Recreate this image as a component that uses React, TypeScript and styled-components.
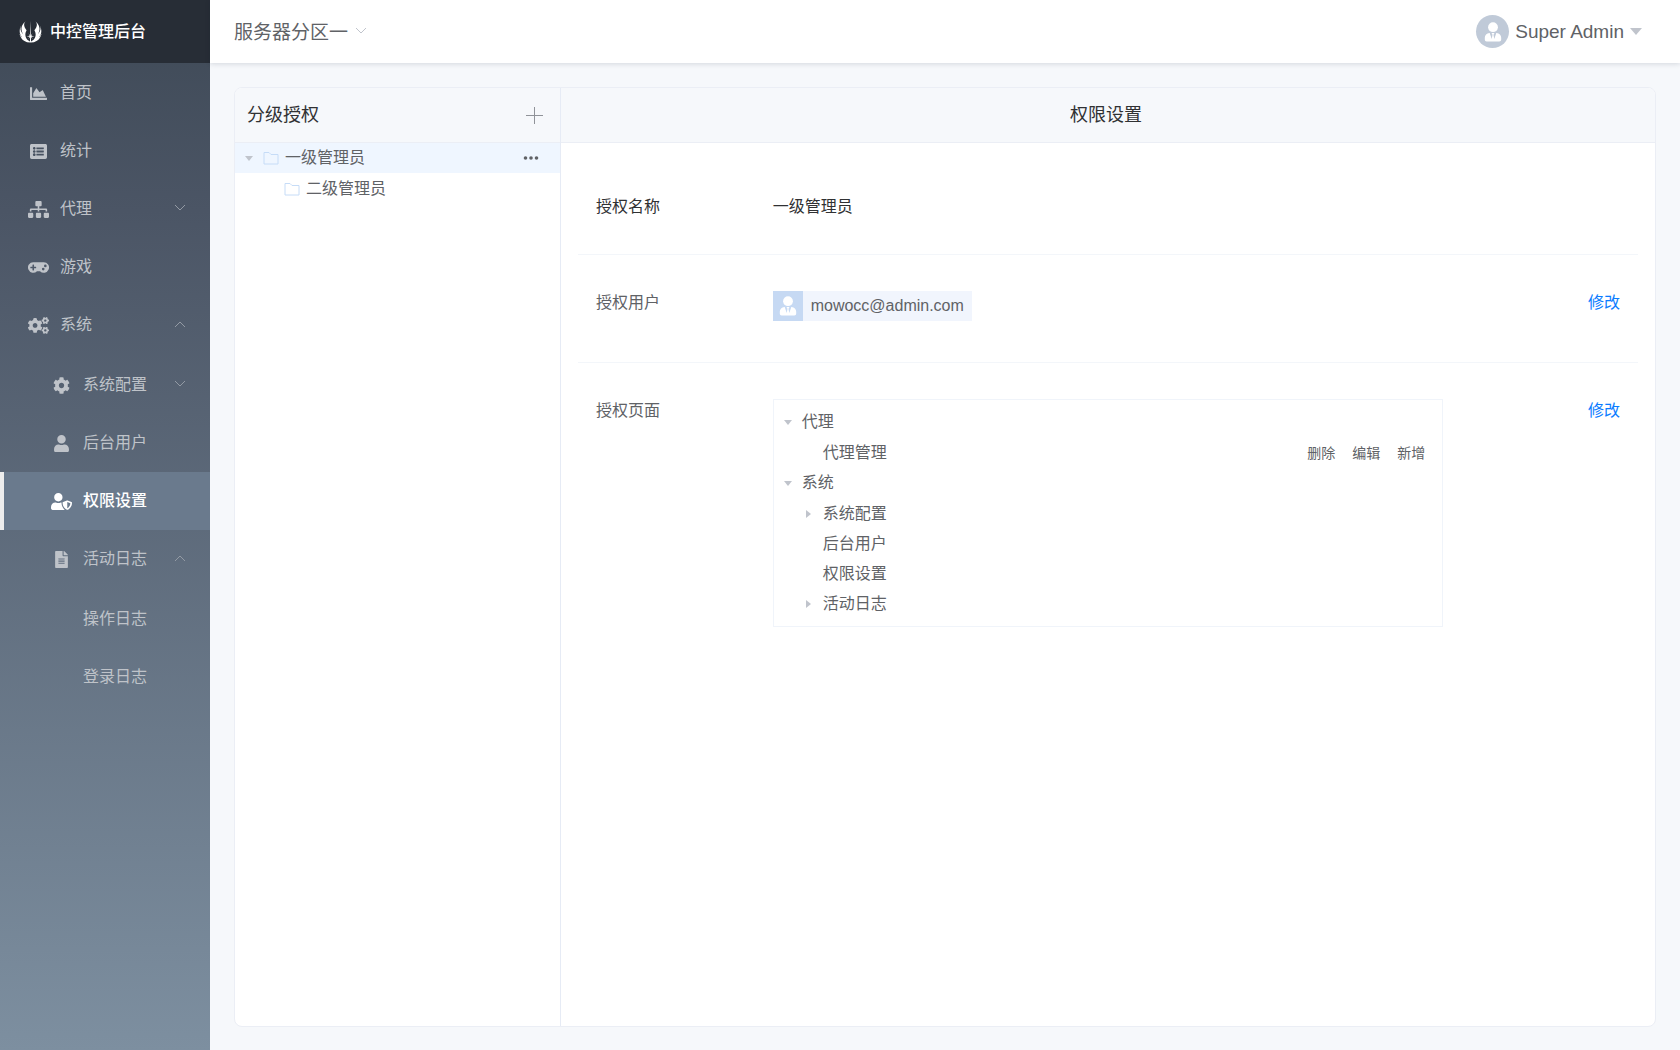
import React from 'react';
import styled, { createGlobalStyle } from 'styled-components';
import {
  FaChartArea,
  FaCog,
  FaCogs,
  FaFileAlt,
  FaGamepad,
  FaJediOrder,
  FaListAlt,
  FaSitemap,
  FaUser,
  FaUserShield,
} from 'react-icons/fa';

const GlobalStyle = createGlobalStyle`
  *, *::before, *::after { box-sizing: border-box; }
  body {
    margin: 0;
    background: #f6f8fb;
    color: #606266;
    font: 16px/24px "Liberation Sans", "Noto Sans CJK SC", sans-serif;
  }
  button, select { font: inherit; color: inherit; }
  h1, h2, dl, dt, dd, ul { margin: 0; padding: 0; font-weight: 400; }
  ul { list-style: none; }
  svg { display: block; flex: none; }
`;

const Shell = styled.div`
  display: grid;
  grid-template-columns: 210px minmax(0, 1fr);
  min-height: 100vh;
`;

/* ---------- sidebar ---------- */

const Sidebar = styled.aside`
  display: flex;
  flex-direction: column;
  background: linear-gradient(180deg, #3e4956 0%, #4b5565 20%, #7d8fa0 100%);
`;

const Brand = styled.h1`
  display: flex;
  align-items: center;
  gap: 7px;
  height: 63px;
  padding: 0 18px;
  background: #272d36;
  color: #fff;
  font-size: 16px;
  font-weight: 500;
`;

const Menu = styled.ul<{ $nested: boolean }>`
  padding-top: ${(p) => (p.$nested ? 2 : 1)}px;
`;

const MenuLink = styled.a<{ $level: number; $active?: boolean }>`
  display: flex;
  align-items: center;
  gap: 11px;
  height: 58px;
  padding: 0 24px 0 ${(p) => (p.$level === 1 ? 24 : p.$level === 2 ? 47 : 79)}px;
  border-left: 4px solid ${(p) => (p.$active ? '#ededed' : 'transparent')};
  background: ${(p) => (p.$active ? '#6a7a8d' : 'transparent')};
  background-clip: padding-box;
  color: ${(p) => (p.$active ? '#fff' : '#bfc3c9')};
  font-weight: ${(p) => (p.$active ? 500 : 400)};
  text-decoration: none;
`;

const MenuIcon = styled.span`
  display: flex;
  justify-content: center;
  width: 21px;
`;

const MenuLabel = styled.span`
  flex: 1;
`;

type MenuEntry = {
  label: string;
  icon?: React.ReactNode;
  active?: boolean;
  arrow?: 'up' | 'down';
  children?: MenuEntry[];
};

const menu: MenuEntry[] = [
  { label: '首页', icon: <FaChartArea size={17} /> },
  { label: '统计', icon: <FaListAlt size={17} /> },
  { label: '代理', icon: <FaSitemap size={21} />, arrow: 'down' },
  { label: '游戏', icon: <FaGamepad size={21} /> },
  {
    label: '系统',
    icon: <FaCogs size={21} />,
    arrow: 'up',
    children: [
      { label: '系统配置', icon: <FaCog size={17} />, arrow: 'down' },
      { label: '后台用户', icon: <FaUser size={17} /> },
      { label: '权限设置', icon: <FaUserShield size={21} />, active: true },
      {
        label: '活动日志',
        icon: <FaFileAlt size={17} />,
        arrow: 'up',
        children: [{ label: '操作日志' }, { label: '登录日志' }],
      },
    ],
  },
];

function Chevron({ up, color = '#939aa4' }: { up?: boolean; color?: string }) {
  return (
    <svg width="12" height="10" viewBox="0 0 12 10" fill="none" stroke={color} aria-hidden="true">
      <path d={up ? 'M1 7l5-5 5 5' : 'M1 1l5 5 5-5'} />
    </svg>
  );
}

function MenuList({ items, level = 1 }: { items: MenuEntry[]; level?: number }) {
  return (
    <Menu $nested={level > 1}>
      {items.map((item) => (
        <li key={item.label}>
          <MenuLink href="#" $level={level} $active={item.active}>
            {item.icon && <MenuIcon>{item.icon}</MenuIcon>}
            <MenuLabel>{item.label}</MenuLabel>
            {item.arrow && <Chevron up={item.arrow === 'up'} />}
          </MenuLink>
          {item.children && <MenuList items={item.children} level={level + 1} />}
        </li>
      ))}
    </Menu>
  );
}

/* ---------- header ---------- */

const Main = styled.div`
  display: flex;
  flex-direction: column;
`;

const Header = styled.header`
  display: flex;
  align-items: center;
  justify-content: space-between;
  height: 63px;
  padding: 0 38px 0 24px;
  background: #fff;
  box-shadow: 0 1px 5px rgba(0, 21, 41, 0.14);
  font-size: 19px;
`;

const ZonePicker = styled.label`
  display: grid;
  align-items: center;
  justify-items: end;

  > * { grid-area: 1 / 1; }
  > svg { pointer-events: none; }
`;

const ZoneSelect = styled.select`
  appearance: none;
  padding: 2px 18px 0 0;
  border: 0;
  background: none;
  outline-offset: 4px;
`;

const UserButton = styled.button`
  display: flex;
  align-items: center;
  gap: 6px;
  padding: 0;
  border: 0;
  background: none;
`;

const Avatar = styled.span<{ $round?: boolean }>`
  display: flex;
  align-items: center;
  justify-content: center;
  width: ${(p) => (p.$round ? 33 : 30)}px;
  height: ${(p) => (p.$round ? 33 : 30)}px;
  border-radius: ${(p) => (p.$round ? '50%' : '0')};
  background: ${(p) => (p.$round ? '#c0cad8' : '#c6d9f3')};
`;

const Caret = styled.span<{ $dir?: 'down' | 'right'; $large?: boolean }>`
  width: 0;
  height: 0;
  border: ${(p) => (p.$large ? 6 : 4)}px solid transparent;
  ${(p) =>
    p.$dir === 'right'
      ? 'border-left: 5px solid #c0c4cc; border-right: 0;'
      : `border-top: ${p.$large ? 7 : 5}px solid #c0c4cc; border-bottom: 0;`}
`;

function PersonGlyph() {
  return (
    <svg width="18" height="20" viewBox="0 0 18 20" fill="#fff" aria-hidden="true">
      <circle cx="9" cy="5.200" r="4.900" />
      <path
        fillRule="evenodd"
        d="M5.400 10.900h7.200c2.700.3 4.600 2.300 4.600 4.900v1.800c0 1.300-.7 1.900-1.900 1.900H2.700c-1.200 0-1.900-.6-1.900-1.900v-1.800c0-2.600 1.900-4.600 4.600-4.900zM5.700 10.900l2 6.200.8-4.400-.8-1.100v-.7zM12.300 10.900h-2v.7l-.8 1.100.8 4.400z"
      />
    </svg>
  );
}

/* ---------- content card ---------- */

const Card = styled.main`
  flex: 1;
  display: grid;
  grid-template-columns: 326px minmax(0, 1fr);
  margin: 24px 24px 23px;
  border: 1px solid #ebeef5;
  border-radius: 8px;
  background: #fff;
  overflow: hidden;
`;

const Pane = styled.section<{ $divided?: boolean }>`
  border-right: ${(p) => (p.$divided ? '1px solid #e6ebf5' : '0')};
`;

const PaneHeader = styled.header<{ $centered?: boolean }>`
  display: flex;
  align-items: center;
  justify-content: ${(p) => (p.$centered ? 'center' : 'space-between')};
  height: 55px;
  padding: 0 16px 0 12px;
  border-bottom: 1px solid #ebeef5;
  background: #f6f8fb;
  color: #303133;

  h2 { font-size: 18px; }
`;

const IconButton = styled.button`
  display: flex;
  padding: 0;
  border: 0;
  background: none;
`;

const TreeGroup = styled.ul<{ $nested?: boolean }>`
  padding-top: ${(p) => (p.$nested ? 1 : 0)}px;
`;

const TreeRow = styled.div<{ $depth?: number; $selected?: boolean }>`
  display: flex;
  align-items: center;
  height: 30px;
  padding-left: ${(p) => (p.$depth ?? 0) * 21}px;
  padding-right: 21px;
  background: ${(p) => (p.$selected ? '#eff6ff' : 'transparent')};
`;

const TreeToggle = styled.button`
  display: flex;
  align-items: center;
  justify-content: center;
  width: 28px;
  height: 30px;
  padding: 0;
  border: 0;
  background: none;
`;

const TreeLabel = styled.span`
  flex: 1;
`;

const FolderSlot = styled.span`
  width: 22px;
`;

function Folder() {
  return (
    <FolderSlot>
      <svg width="16" height="14" viewBox="0 0 16 14" fill="none" stroke="#c6dcf7" aria-hidden="true">
        <path d="M1 1.500h5l2 2h7v9.500H1z" />
      </svg>
    </FolderSlot>
  );
}

const Details = styled.dl`
  padding: 16px 17px;
`;

const Field = styled.div<{ $strong?: boolean }>`
  display: grid;
  grid-template-columns: 4fr 16fr 4fr;
  padding: 36px 0 35px;
  color: ${(p) => (p.$strong ? '#303133' : '#606266')};

  &:not(:last-child) { border-bottom: 1px solid #f3f6fa; }
  > * { padding: 0 18px; }
`;

const FieldAction = styled.dd`
  display: flex;
  align-items: flex-start;
  justify-content: flex-end;
`;

const TextButton = styled.button`
  padding: 0;
  border: 0;
  background: none;
  color: #0a7cff;
`;

const UserTag = styled.span`
  display: inline-flex;
  align-items: center;
  gap: 8px;
  height: 30px;
  margin-bottom: 6px;
  padding-right: 8px;
  background: #f1f5fd;
  vertical-align: top;
`;

const PageTree = styled.div`
  padding: 7px 0;
  border: 1px solid #f0f4fa;
`;

const Permissions = styled.span`
  display: flex;
  gap: 17px;
  margin-right: -4px;
  font-size: 14px;
`;

type PageNode = { label: string; state?: 'open' | 'closed'; permissions?: string[]; children?: PageNode[] };

const pages: PageNode[] = [
  {
    label: '代理',
    state: 'open',
    children: [{ label: '代理管理', permissions: ['删除', '编辑', '新增'] }],
  },
  {
    label: '系统',
    state: 'open',
    children: [
      { label: '系统配置', state: 'closed' },
      { label: '后台用户' },
      { label: '权限设置' },
      { label: '活动日志', state: 'closed' },
    ],
  },
];

const TreeIndent = styled.span`
  width: 28px;
`;

function PageNodes({ nodes, depth = 0 }: { nodes: PageNode[]; depth?: number }) {
  return (
    <TreeGroup $nested={depth > 0}>
      {nodes.map((node) => (
        <li key={node.label}>
          <TreeRow $depth={depth}>
            {node.state ? (
              <TreeToggle type="button" aria-label={node.label} aria-expanded={node.state === 'open'}>
                <Caret $dir={node.state === 'open' ? 'down' : 'right'} />
              </TreeToggle>
            ) : (
              <TreeIndent />
            )}
            <TreeLabel>{node.label}</TreeLabel>
            {node.permissions && (
              <Permissions>
                {node.permissions.map((name) => (
                  <span key={name}>{name}</span>
                ))}
              </Permissions>
            )}
          </TreeRow>
          {node.children && <PageNodes nodes={node.children} depth={depth + 1} />}
        </li>
      ))}
    </TreeGroup>
  );
}

export default function App() {
  return (
    <>
      <GlobalStyle />
      <Shell>
        <Sidebar>
          <Brand>
            <FaJediOrder size={25} />
            中控管理后台
          </Brand>
          <nav>
            <MenuList items={menu} />
          </nav>
        </Sidebar>
        <Main>
          <Header>
            <ZonePicker>
              <ZoneSelect aria-label="服务器分区">
                <option>服务器分区一</option>
              </ZoneSelect>
              <Chevron color="#c0c4cc" />
            </ZonePicker>
            <UserButton type="button">
              <Avatar $round>
                <PersonGlyph />
              </Avatar>
              Super Admin
              <Caret $large />
            </UserButton>
          </Header>
          <Card>
            <Pane $divided>
              <PaneHeader>
                <h2>分级授权</h2>
                <IconButton type="button" aria-label="新增">
                  <svg width="19" height="19" viewBox="0 0 19 19" stroke="#909399" aria-hidden="true">
                    <path d="M9.500 1v17M1 9.500h17" />
                  </svg>
                </IconButton>
              </PaneHeader>
              <TreeGroup>
                <li>
                  <TreeRow $selected>
                    <TreeToggle type="button" aria-label="一级管理员" aria-expanded="true">
                      <Caret />
                    </TreeToggle>
                    <Folder />
                    <TreeLabel>一级管理员</TreeLabel>
                    <IconButton type="button" aria-label="更多">
                      <svg width="16" height="4" viewBox="0 0 16 4" fill="#606266" aria-hidden="true">
                        <circle cx="2.500" cy="2" r="1.800" />
                        <circle cx="8" cy="2" r="1.800" />
                        <circle cx="13.500" cy="2" r="1.800" />
                      </svg>
                    </IconButton>
                  </TreeRow>
                  <TreeGroup $nested>
                    <li>
                      <TreeRow $depth={1}>
                        <TreeIndent />
                        <Folder />
                        <TreeLabel>二级管理员</TreeLabel>
                      </TreeRow>
                    </li>
                  </TreeGroup>
                </li>
              </TreeGroup>
            </Pane>
            <Pane>
              <PaneHeader $centered>
                <h2>权限设置</h2>
              </PaneHeader>
              <Details>
                <Field $strong>
                  <dt>授权名称</dt>
                  <dd>一级管理员</dd>
                </Field>
                <Field>
                  <dt>授权用户</dt>
                  <dd>
                    <UserTag>
                      <Avatar>
                        <PersonGlyph />
                      </Avatar>
                      mowocc@admin.com
                    </UserTag>
                  </dd>
                  <FieldAction>
                    <TextButton type="button">修改</TextButton>
                  </FieldAction>
                </Field>
                <Field>
                  <dt>授权页面</dt>
                  <dd>
                    <PageTree>
                      <PageNodes nodes={pages} />
                    </PageTree>
                  </dd>
                  <FieldAction>
                    <TextButton type="button">修改</TextButton>
                  </FieldAction>
                </Field>
              </Details>
            </Pane>
          </Card>
        </Main>
      </Shell>
    </>
  );
}
